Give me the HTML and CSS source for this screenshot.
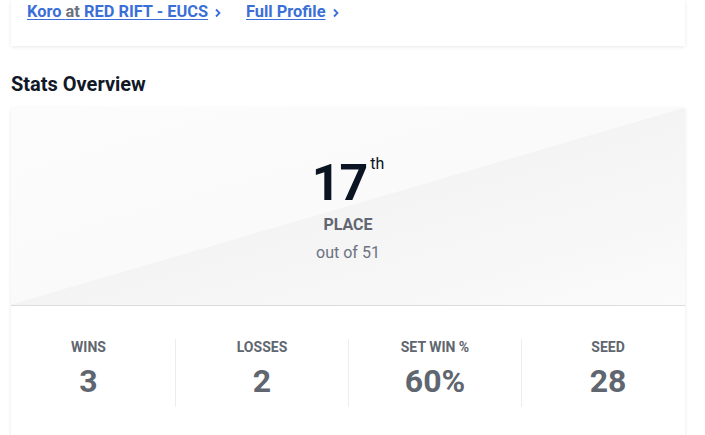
FILE: index.html
```html
<!DOCTYPE html>
<html lang="en">
<head>
    <meta charset="UTF-8">
    <meta name="viewport" content="width=device-width, initial-scale=1.0">
    <title>Player Stats</title>
    <link rel="stylesheet" href="styles.css">
</head>
<body>
    <div class="page">
        <div class="card links-card">
            <a class="link" href="#">Koro <span class="muted">at</span> RED RIFT - EUCS</a>
            <svg class="chev" width="8" height="10" viewBox="0 0 8 10"><path d="M2 1.5 L5.5 5 L2 8.5" fill="none" stroke="#3b6fd8" stroke-width="1.8"/></svg>
            <a class="link profile" href="#">Full Profile</a>
            <svg class="chev" width="8" height="10" viewBox="0 0 8 10"><path d="M2 1.5 L5.5 5 L2 8.5" fill="none" stroke="#3b6fd8" stroke-width="1.8"/></svg>
        </div>

        <h2 class="section-title">Stats Overview</h2>

        <div class="card stats-card">
            <div class="hero">
                <div class="rank">
                    <span class="rank-num">17</span>
                    <span class="rank-suffix">th</span>
                </div>
                <div class="place">PLACE</div>
                <div class="out-of">out of 51</div>
            </div>
            <div class="stats-row">
                <div class="stat">
                    <div class="stat-label">WINS</div>
                    <div class="stat-value">3</div>
                </div>
                <div class="stat">
                    <div class="stat-label">LOSSES</div>
                    <div class="stat-value">2</div>
                </div>
                <div class="stat">
                    <div class="stat-label">SET WIN %</div>
                    <div class="stat-value">60%</div>
                </div>
                <div class="stat">
                    <div class="stat-label">SEED</div>
                    <div class="stat-value">28</div>
                </div>
            </div>
        </div>
    </div>
</body>
</html>
```

FILE: styles.css
```css
body {
    margin: 0;
    font-family: Roboto, "Liberation Sans", Arial, sans-serif;
    background: #fff;
    overflow: hidden;
}
.page {
    width: 674px;
    padding: 0 11px;
}
.card {
    background: #fff;
    box-shadow: 0 1px 4px rgba(0, 0, 0, 0.09);
}
.links-card {
    display: flex;
    align-items: center;
    padding: 0 16px 22px;
    height: 24px;
}
.link {
    color: #3b6fd8;
    font-size: 16.4px;
    font-weight: 700;
    line-height: 24px;
    text-decoration: underline;
    text-underline-offset: 2px;
}
.muted {
    color: #6b7280;
}
.chev {
    margin-left: 6px;
    margin-top: 2px;
}
.profile {
    margin-left: 24px;
}
.section-title {
    margin: 26px 0 12px;
    font-size: 20px;
    line-height: 24px;
    font-weight: 700;
    color: #111827;
}
.hero {
    padding: 47px 0 42px;
    text-align: center;
    border-bottom: 1px solid #dcdcdc;
    background: linear-gradient(to bottom right, #fcfcfc 0%, #fafafa 49.8%, #f4f4f4 50%, #f7f7f7 75%, #fbfbfb 100%);
}
.rank {
    display: inline-flex;
    align-items: flex-start;
}
.rank-num {
    font-size: 50px;
    line-height: 56px;
    font-weight: 700;
    color: #0b1423;
    letter-spacing: -1px;
}
.rank-suffix {
    font-size: 16px;
    line-height: 16px;
    margin: 1px 0 0 3px;
    color: #0b1423;
}
.place {
    margin-top: 4px;
    font-size: 16px;
    line-height: 20px;
    font-weight: 700;
    color: #5f6670;
}
.out-of {
    margin-top: 8px;
    font-size: 16px;
    line-height: 20px;
    color: #6b7280;
}
.stats-row {
    display: grid;
    grid-template-columns: repeat(4, 173px);
    margin: 0 -9px;
    padding: 33px 0 40px;
}
.stat {
    text-align: center;
    padding-bottom: 8px;
}
.stat + .stat {
    border-left: 1px solid #ededed;
}
.stat-label {
    font-size: 14px;
    line-height: 16px;
    font-weight: 700;
    color: #5f6670;
    margin-bottom: 8px;
}
.stat-value {
    font-size: 32px;
    line-height: 36px;
    font-weight: 700;
    color: #5f6670;
}
```
